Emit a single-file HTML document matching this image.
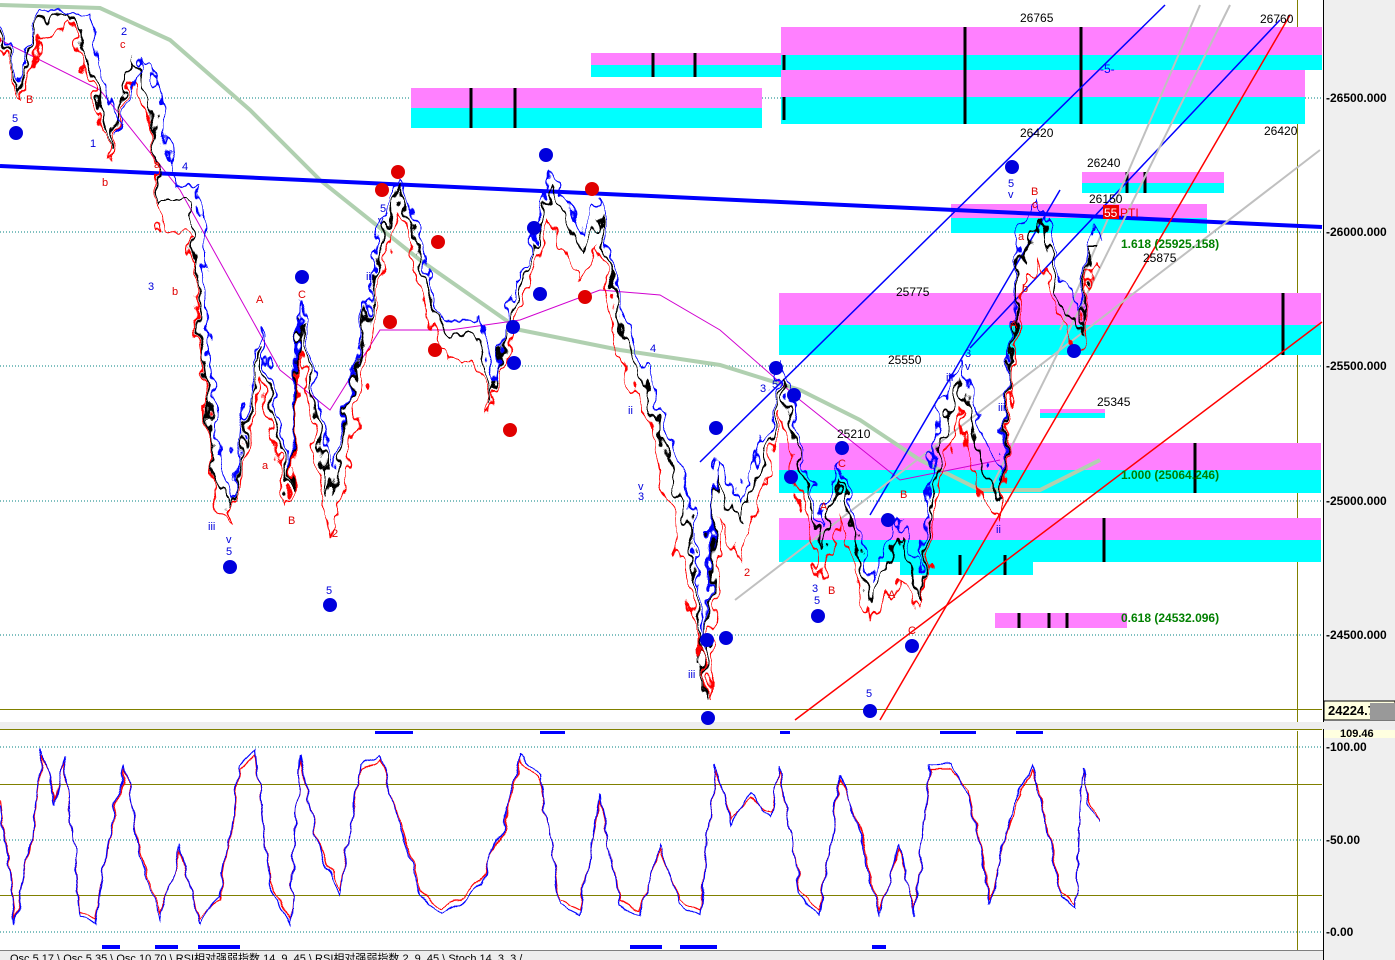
<!DOCTYPE html>
<html><head><style>
html,body{margin:0;padding:0;background:#fff;width:1395px;height:960px;overflow:hidden}
svg{display:block}
text{font-family:"Liberation Sans","Noto Sans CJK SC",sans-serif}
</style></head><body>
<svg width="1395" height="960" xmlns="http://www.w3.org/2000/svg">
<defs>
<filter id="jit" x="-5%" y="-5%" width="110%" height="110%">
<feTurbulence type="fractalNoise" baseFrequency="0.09 0.05" numOctaves="2" seed="3"/>
<feDisplacementMap in="SourceGraphic" scale="22" xChannelSelector="R" yChannelSelector="G"/>
</filter>
<filter id="jit2" x="-5%" y="-5%" width="110%" height="110%">
<feTurbulence type="fractalNoise" baseFrequency="0.05" numOctaves="2" seed="7"/>
<feDisplacementMap in="SourceGraphic" scale="10" xChannelSelector="R" yChannelSelector="G"/>
</filter>
</defs>
<rect width="1395" height="960" fill="#fff"/>
<rect x="1323" y="0" width="72" height="960" fill="#efefef"/>
<line x1="1323.5" y1="0" x2="1323.5" y2="960" stroke="#000"/>
<g stroke="#008080" stroke-dasharray="1,2" stroke-width="1">
<line x1="0" y1="98" x2="1322" y2="98"/><line x1="0" y1="232" x2="1322" y2="232"/><line x1="0" y1="366" x2="1322" y2="366"/><line x1="0" y1="501" x2="1322" y2="501"/><line x1="0" y1="635" x2="1322" y2="635"/>
<line x1="0" y1="747" x2="1322" y2="747"/><line x1="0" y1="840" x2="1322" y2="840"/><line x1="0" y1="932" x2="1322" y2="932"/>
</g>
<g stroke="#808000" stroke-width="1">
<line x1="1297.5" y1="0" x2="1297.5" y2="722"/><line x1="1297.5" y1="731" x2="1297.5" y2="950"/>
<line x1="0" y1="709.5" x2="1322" y2="709.5"/>
<line x1="0" y1="729.5" x2="1322" y2="729.5"/>
<line x1="0" y1="784.5" x2="1322" y2="784.5"/><line x1="0" y1="895.5" x2="1322" y2="895.5"/>
</g>
<rect x="0" y="722" width="1395" height="7" fill="#eee"/>
<g>
<rect x="411" y="88" width="351" height="20" fill="#ff80ff"/><rect x="411" y="108" width="351" height="20" fill="#00ffff"/>
<rect x="591" y="53" width="190" height="12" fill="#ff80ff"/><rect x="591" y="65" width="190" height="12" fill="#00ffff"/>
<rect x="781" y="27" width="541" height="28" fill="#ff80ff"/><rect x="781" y="55" width="541" height="15" fill="#00ffff"/>
<rect x="781" y="70" width="524" height="27" fill="#ff80ff"/><rect x="781" y="97" width="524" height="27" fill="#00ffff"/>
<rect x="1082" y="172" width="142" height="11" fill="#ff80ff"/><rect x="1082" y="183" width="142" height="10" fill="#00ffff"/>
<rect x="951" y="204" width="256" height="14" fill="#ff80ff"/><rect x="951" y="218" width="256" height="15" fill="#00ffff"/>
<rect x="779" y="293" width="542" height="32" fill="#ff80ff"/><rect x="779" y="325" width="542" height="30" fill="#00ffff"/>
<rect x="1040" y="409" width="65" height="9" fill="#ff80ff"/><rect x="1040" y="413" width="65" height="5" fill="#00ffff"/>
<rect x="779" y="443" width="542" height="27" fill="#ff80ff"/><rect x="779" y="470" width="542" height="23" fill="#00ffff"/>
<rect x="779" y="518" width="542" height="22" fill="#ff80ff"/><rect x="779" y="540" width="542" height="22" fill="#00ffff"/>
<rect x="900" y="562" width="133" height="13" fill="#00ffff"/>
<rect x="995" y="613" width="132" height="15" fill="#ff80ff"/>
</g>
<g stroke="#000" stroke-width="3">
<line x1="471" y1="88" x2="471" y2="128"/><line x1="515" y1="88" x2="515" y2="128"/>
<line x1="653" y1="53" x2="653" y2="77"/><line x1="695" y1="53" x2="695" y2="77"/>
<line x1="965" y1="27" x2="965" y2="124"/><line x1="1081" y1="27" x2="1081" y2="124"/>
<line x1="784" y1="55" x2="784" y2="70"/><line x1="784" y1="97" x2="784" y2="120"/>
<line x1="1283" y1="293" x2="1283" y2="355"/><line x1="1195" y1="443" x2="1195" y2="493"/>
<line x1="1104" y1="518" x2="1104" y2="562"/><line x1="1127" y1="172" x2="1127" y2="193"/><line x1="1145" y1="172" x2="1145" y2="193"/>
<line x1="1019" y1="613" x2="1019" y2="628"/><line x1="1049" y1="613" x2="1049" y2="628"/><line x1="1067" y1="613" x2="1067" y2="628"/>
<line x1="960" y1="555" x2="960" y2="575"/><line x1="1005" y1="555" x2="1005" y2="575"/>
</g>
<polyline fill="none" stroke="#b0d0b0" stroke-width="4" points="0,5 100,8 170,40 250,110 320,180 420,260 520,330 620,350 720,365 800,390 860,420 920,460 980,490 1040,490 1100,460"/>
<polyline fill="none" stroke="#d000d0" stroke-width="1" points="0,40 100,90 180,190 230,280 280,370 330,410 380,330 450,330 520,320 600,290 660,295 720,330 800,400 900,480 1000,460"/>
<line x1="0" y1="166" x2="1322" y2="227" stroke="#0000ff" stroke-width="4"/>
<g stroke="#0000ff" stroke-width="1.5">
<line x1="700" y1="462" x2="1165" y2="5"/><line x1="970" y1="348" x2="1280" y2="20"/>
<line x1="870" y1="515" x2="1060" y2="190"/>
</g>
<g stroke="#ff0000" stroke-width="1.5">
<line x1="795" y1="720" x2="1322" y2="322"/><line x1="880" y1="720" x2="1290" y2="15"/>
</g>
<g stroke="#c0c0c0" stroke-width="2">
<line x1="735" y1="600" x2="1320" y2="150"/><line x1="990" y1="490" x2="1230" y2="5"/>
<line x1="1060" y1="330" x2="1200" y2="5"/>
</g>
<g filter="url(#jit)">
<polyline fill="none" stroke="#000" stroke-width="2" points="0,30 20,90 40,20 70,10 100,100 110,150 130,60 150,100 160,200 190,200 215,480 230,510 260,350 290,490 300,320 330,500 340,450 380,250 400,190 420,260 440,330 480,340 490,400 510,320 530,260 550,190 580,250 600,220 620,330 650,400 690,530 705,700 715,480 740,520 770,440 780,380 800,460 820,550 840,480 870,600 900,540 920,600 940,440 960,380 980,460 1000,500 1020,260 1040,220 1060,300 1080,330 1090,250 1100,250"/>
<polyline fill="none" stroke="#ff0000" stroke-width="1.5" points="0,40 20,100 40,40 70,20 100,120 110,160 130,80 150,120 160,230 190,230 215,500 230,520 260,380 290,510 300,350 330,540 345,480 380,270 400,210 420,290 440,350 480,370 490,410 510,340 530,280 550,220 580,280 600,250 620,360 650,420 690,600 710,700 720,520 740,560 770,470 780,410 800,500 820,580 840,520 870,620 900,580 920,610 940,480 960,410 980,500 1000,520 1020,300 1040,260 1060,320 1080,350 1090,270 1100,265"/>
<polyline fill="none" stroke="#0000ff" stroke-width="1.5" points="0,20 20,80 40,10 90,10 100,70 120,130 140,60 160,90 170,180 200,190 215,430 230,500 260,330 290,470 300,300 330,470 345,420 380,230 400,180 420,240 440,320 480,320 495,380 510,300 530,250 550,170 580,230 600,200 620,310 650,380 690,500 705,650 715,460 740,500 770,420 780,360 800,440 820,530 840,460 870,580 900,520 920,570 940,400 960,360 980,430 1000,480 1020,230 1040,200 1060,280 1080,310 1090,230 1105,240"/>
</g>
<g font-size="12" fill="#000">
<text x="1020" y="22">26765</text><text x="1260" y="23">26760</text>
<text x="1020" y="137">26420</text><text x="1264" y="135">26420</text>
<text x="1087" y="167">26240</text><text x="1089" y="203">26150</text>
<text x="1143" y="262">25875</text><text x="896" y="296">25775</text>
<text x="888" y="364">25550</text><text x="1097" y="406">25345</text><text x="837" y="438">25210</text>
<text x="1100" y="73" fill="#0000ff">-5-</text>
</g>
<g font-size="12" fill="#008000" font-weight="bold"><text x="1121" y="248">1.618 (25925.158)</text><text x="1121" y="479">1.000 (25064.246)</text><text x="1121" y="622">0.618 (24532.096)</text></g>
<rect x="1103" y="205" width="16" height="14" fill="#e00"/><text x="1104" y="217" font-size="12" fill="#fff">55</text><text x="1120" y="217" font-size="12" fill="#e00">PTI</text>
<g font-size="11" fill="#0000dd">
<text x="12" y="122">5</text><text x="226" y="543">v</text><text x="226" y="555">5</text><text x="208" y="530">iii</text><text x="326" y="594">5</text><text x="148" y="290">3</text><text x="90" y="147">1</text><text x="121" y="35">2</text><text x="182" y="170">4</text><text x="380" y="212">5</text><text x="378" y="224">v</text><text x="366" y="280">iii</text><text x="638" y="490">v</text><text x="638" y="500">3</text><text x="650" y="352">4</text><text x="628" y="414">ii</text><text x="812" y="592">3</text><text x="814" y="604">5</text><text x="866" y="697">5</text><text x="760" y="392">3</text><text x="772" y="388">5</text><text x="1008" y="187">5</text><text x="1008" y="198">v</text><text x="998" y="411">iii</text><text x="996" y="533">ii</text><text x="688" y="678">iii</text><text x="946" y="381">iii</text><text x="965" y="370">v</text><text x="965" y="357">3</text>
</g>
<g font-size="11" fill="#e00000">
<text x="26" y="103">B</text><text x="102" y="186">b</text><text x="120" y="48">c</text><text x="154" y="168">a</text><text x="172" y="295">b</text><text x="256" y="303">A</text><text x="298" y="298">C</text><text x="288" y="524">B</text><text x="262" y="469">a</text><text x="332" y="537">2</text><text x="820" y="510">A</text><text x="828" y="594">B</text><text x="838" y="467">C</text><text x="900" y="498">B</text><text x="888" y="598">A</text><text x="908" y="634">C</text><text x="1010" y="328">A</text><text x="1031" y="195">B</text><text x="1032" y="208">c</text><text x="1018" y="240">a</text><text x="1022" y="292">b</text><text x="744" y="576">2</text>
</g>
<g fill="#0000dd">
<circle cx="16" cy="133" r="7"/><circle cx="230" cy="567" r="7"/><circle cx="330" cy="605" r="7"/><circle cx="302" cy="277" r="7"/><circle cx="546" cy="155" r="7"/><circle cx="534" cy="228" r="7"/><circle cx="540" cy="294" r="7"/><circle cx="513" cy="327" r="7"/><circle cx="514" cy="363" r="7"/>
<circle cx="776" cy="368" r="7"/><circle cx="794" cy="395" r="7"/><circle cx="716" cy="428" r="7"/><circle cx="791" cy="477" r="7"/><circle cx="842" cy="448" r="7"/><circle cx="818" cy="616" r="7"/><circle cx="726" cy="638" r="7"/><circle cx="707" cy="640" r="7"/><circle cx="708" cy="718" r="7"/><circle cx="870" cy="711" r="7"/><circle cx="912" cy="646" r="7"/><circle cx="888" cy="520" r="7"/><circle cx="1012" cy="167" r="7"/><circle cx="1074" cy="351" r="7"/>
</g>
<g fill="#e00000">
<circle cx="382" cy="190" r="7"/><circle cx="398" cy="172" r="7"/><circle cx="592" cy="189" r="7"/><circle cx="438" cy="242" r="7"/><circle cx="390" cy="322" r="7"/><circle cx="435" cy="350" r="7"/><circle cx="585" cy="297" r="7"/><circle cx="510" cy="430" r="7"/>
</g>
<g font-size="12" font-weight="bold" fill="#000">
<text x="1326" y="102">-26500.000</text><text x="1326" y="236">-26000.000</text><text x="1326" y="370">-25500.000</text><text x="1326" y="505">-25000.000</text><text x="1326" y="639">-24500.000</text>
<text x="1326" y="751">-100.00</text><text x="1326" y="844">-50.00</text><text x="1326" y="936">-0.00</text>
</g>
<rect x="1324" y="701" width="71" height="19" fill="#ffffe0" stroke="#000"/><text x="1328" y="715" font-size="13" font-weight="bold">24224.7</text>
<rect x="1370" y="703" width="25" height="17" fill="#999"/>
<rect x="1324" y="730" width="71" height="8" fill="#ffffe0"/><text x="1340" y="737" font-size="11" font-weight="bold">109.46</text>
<g filter="url(#jit2)">
<polyline fill="none" stroke="#ff0000" stroke-width="1.2" points="0,800 15,920 30,850 42,755 55,800 65,760 80,910 95,920 110,830 125,770 140,850 160,915 180,850 200,920 220,900 240,770 255,755 270,880 290,920 300,760 320,850 340,890 360,770 380,760 400,820 420,890 440,910 460,900 480,880 500,840 520,760 540,780 560,900 580,910 600,800 620,900 640,910 660,850 680,900 700,910 715,770 730,820 750,800 770,810 780,770 800,890 820,910 840,780 860,830 880,910 900,850 915,910 930,770 950,770 970,790 990,900 1010,820 1030,770 1040,790 1060,890 1075,905 1083,770 1090,800 1100,820"/>
<polyline fill="none" stroke="#0000ff" stroke-width="1.2" points="0,805 15,925 30,845 42,750 55,805 65,755 80,915 95,925 110,825 125,765 140,855 160,920 180,845 200,925 220,895 240,765 255,750 270,885 290,925 300,755 320,855 340,895 360,765 380,755 400,825 420,895 440,915 460,905 480,885 500,835 520,755 540,775 560,905 580,915 600,795 620,905 640,915 660,845 680,905 700,915 715,765 730,825 750,795 770,815 780,765 800,895 820,915 840,775 860,835 880,915 900,845 915,915 930,765 950,765 970,795 990,905 1010,815 1030,765 1040,795 1060,895 1075,908 1083,767 1090,805 1100,822"/>
</g>
<g fill="#0000ff"><rect x="102" y="945" width="18" height="4"/><rect x="155" y="945" width="23" height="4"/><rect x="198" y="945" width="42" height="4"/><rect x="630" y="945" width="32" height="4"/><rect x="680" y="945" width="37" height="4"/><rect x="872" y="945" width="14" height="4"/>
<rect x="375" y="731" width="38" height="3"/><rect x="540" y="731" width="25" height="3"/><rect x="780" y="731" width="10" height="3"/><rect x="940" y="731" width="36" height="3"/><rect x="1016" y="731" width="27" height="3"/></g>
<rect x="0" y="950" width="1323" height="10" fill="#eee"/>
<line x1="0" y1="950.5" x2="1323" y2="950.5" stroke="#808080"/>
<text x="10" y="962" font-size="11" fill="#000">Osc 5,17 \ Osc 5,35 \ Osc 10,70 \ RSI相对强弱指数 14, 9, 45 \ RSI相对强弱指数 2, 9, 45 \ Stoch 14, 3, 3 /</text>
</svg>
</body></html>
